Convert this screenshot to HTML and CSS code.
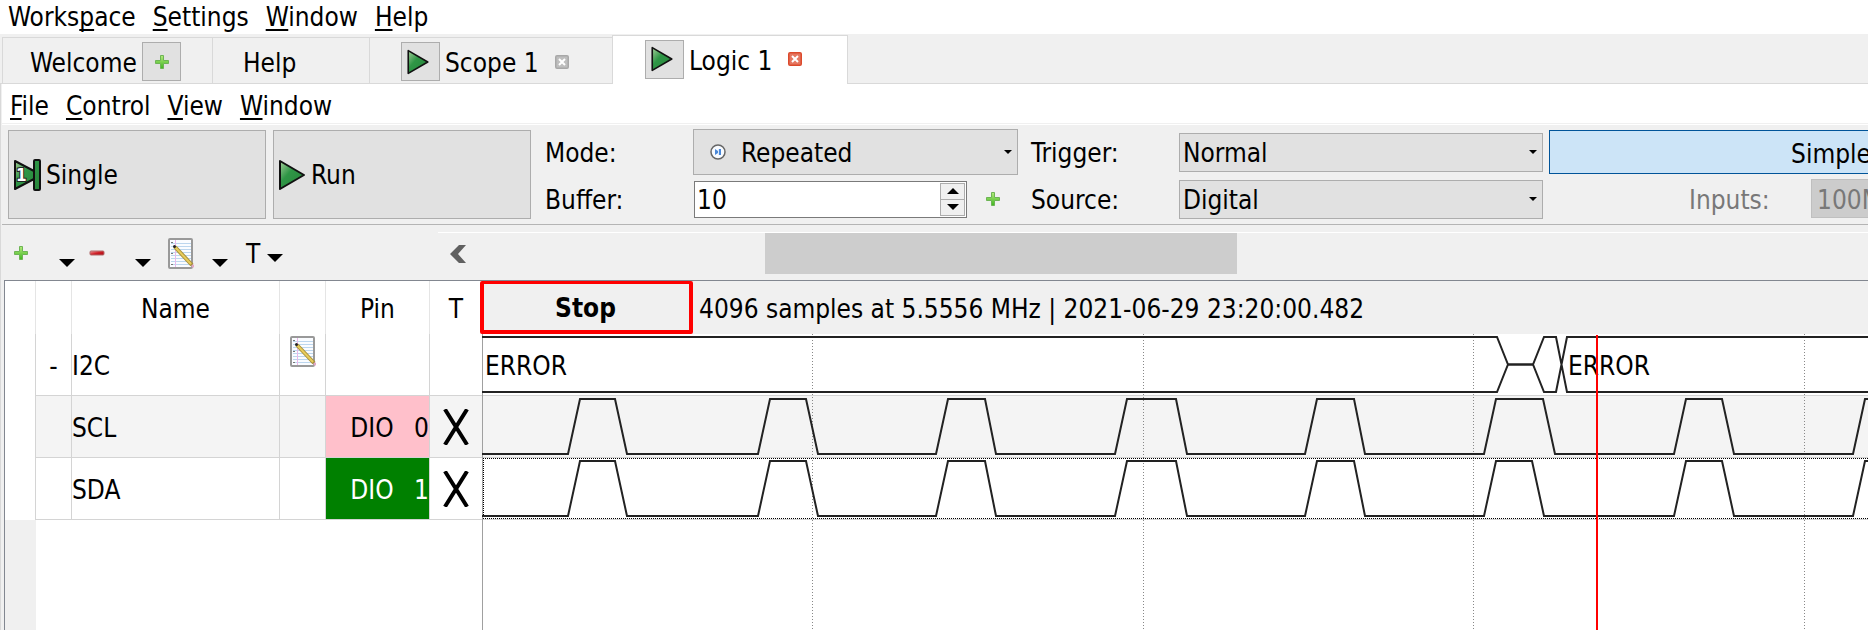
FILE: index.html
```html
<!DOCTYPE html>
<html lang="en">
<head>
<meta charset="utf-8">
<title>Logic 1</title>
<link rel="stylesheet" href="styles.css">
</head>
<body>
<svg class="defs" width="0" height="0" aria-hidden="true">
  <defs>
    <linearGradient id="green" x1="0" y1="0" x2="1" y2="1"><stop offset="0" stop-color="#a8cf9c"/><stop offset=".4" stop-color="#2f9646"/><stop offset="1" stop-color="#27843a"/></linearGradient>
    <linearGradient id="lime" x1="0" y1="0" x2="0" y2="1"><stop offset="0" stop-color="#b4ec7c"/><stop offset="1" stop-color="#3fb520"/></linearGradient>
    <linearGradient id="red" x1="0" y1="0" x2="1" y2="1"><stop offset="0" stop-color="#f0a0a0"/><stop offset=".5" stop-color="#d02028"/><stop offset="1" stop-color="#a80810"/></linearGradient>
    <symbol id="play" viewBox="0 0 28 32"><path d="M2 2 L26 16 L2 30 Z" fill="url(#green)" stroke="#111" stroke-width="2" stroke-linejoin="round"/></symbol>
    <symbol id="plus" viewBox="0 0 16 16"><path d="M6.500 1.500h3v5h5v3h-5v5h-3v-5h-5v-3h5z" fill="url(#lime)" stroke="#6db455" stroke-width="1"/></symbol>
    <symbol id="minus" viewBox="0 0 16 16"><rect x="1" y="6" width="14" height="4" rx="1" fill="url(#red)" stroke="#b06a6a" stroke-width="1"/></symbol>
    <symbol id="note" viewBox="0 0 26 32">
      <rect x="1" y="2" width="23" height="29" rx="1" fill="#fafcff" stroke="#999" stroke-width="2"/>
      <path d="M3 6.500h20M3 9.500h20M3 12.500h20M3 15.500h20M3 18.500h20M3 21.500h20M3 24.500h20M3 27.500h20" stroke="#bcd6ee"/>
      <path d="M7.500 3v27" stroke="#e9b8ea"/>
      <path d="M4 5v1M4 16v1M4 27v1" stroke="#777" stroke-width="2"/>
      <path d="M7 10 L24 28" stroke="#a8903a" stroke-width="4"/>
      <path d="M7 10 L23 27" stroke="#e8cc5c" stroke-width="2"/>
      <circle cx="6.500" cy="9.500" r="1.500" fill="#222"/><circle cx="25" cy="29" r="1.500" fill="#e3a6c4"/>
    </symbol>
    <symbol id="down" viewBox="0 0 16 8"><path d="M0 0h16l-8 8z"/></symbol>
    <symbol id="close" viewBox="0 0 14 14"><rect x="1" y="1" width="12" height="12" rx="1" fill="currentColor" stroke="currentColor" stroke-width="2"/><rect x="1.500" y="1.500" width="11" height="11" fill="#fff" opacity=".25"/><path d="M4 4l6 6M10 4l-6 6" stroke="#fff" stroke-width="2"/></symbol>
  </defs>
</svg>

<nav class="menubar">
  <a href="#">Works<u>p</u>ace</a><a href="#"><u>S</u>ettings</a><a href="#"><u>W</u>indow</a><a href="#"><u>H</u>elp</a>
</nav>

<div class="tabs">
  <div class="tab tab-welcome"><a href="#">Welcome</a><button class="tab-btn" aria-label="Add"><svg class="i16"><use href="#plus"/></svg></button></div>
  <div class="tab tab-help"><a href="#">Help</a></div>
  <div class="tab tab-scope"><button class="tab-btn tab-run" aria-label="Run scope"><svg class="i-tabplay"><use href="#play"/></svg></button><a href="#">Scope 1</a><button class="close" aria-label="Close scope"><svg class="i14"><use href="#close"/></svg></button></div>
  <div class="tab tab-logic"><button class="tab-btn tab-run" aria-label="Run logic"><svg class="i-tabplay"><use href="#play"/></svg></button><a href="#">Logic 1</a><button class="close close-on" aria-label="Close logic"><svg class="i14"><use href="#close"/></svg></button></div>
</div>

<main class="panel">
  <nav class="menubar submenu">
    <a href="#"><u>F</u>ile</a><a href="#"><u>C</u>ontrol</a><a href="#"><u>V</u>iew</a><a href="#"><u>W</u>indow</a>
  </nav>

  <div class="controls">
    <button class="big"><svg class="i-play" viewBox="0 0 28 32"><path d="M2 2 L21 12 V2 Q21 1 22 1 H26 Q27 1 27 2 V30 Q27 31 26 31 H22 Q21 31 21 30 V20 L2 30 Z" fill="url(#green)" stroke="#111" stroke-width="2" stroke-linejoin="round"/><path d="M21 10v12" stroke="#111" stroke-width="2"/><text class="one" x="3" y="22">1</text></svg>Single</button>
    <button class="big"><svg class="i-play"><use href="#play"/></svg>Run</button>

    <div class="fields fields-mode">
      <label for="mode">Mode:</label>
      <div class="pick pick-mode">
        <svg class="i16 mode-icon" viewBox="0 0 16 16"><circle cx="8" cy="8" r="7" fill="#f8fbff" stroke="#666" stroke-width="1.500"/><path d="M5 5l3 2v-2h3v6h-3v-2l-3 2z" fill="#4a88d8"/><path d="M8.500 5v6" stroke="#dce9fa"/></svg>
        <select id="mode"><option>Repeated</option></select><svg class="arrow"><use href="#down"/></svg>
      </div>
      <label for="buffer">Buffer:</label>
      <div class="buffer">
        <div class="spin"><input id="buffer" type="text" value="10"><div class="steps"><button aria-label="Increase"><svg class="step up"><use href="#down"/></svg></button><button aria-label="Decrease"><svg class="step"><use href="#down"/></svg></button></div></div>
        <button class="plain" aria-label="Add buffer"><svg class="i16"><use href="#plus"/></svg></button>
      </div>
    </div>

    <div class="fields fields-trigger">
      <label for="trigger">Trigger:</label>
      <div class="pick"><select id="trigger"><option>Normal</option></select><svg class="arrow"><use href="#down"/></svg></div>
      <label for="source">Source:</label>
      <div class="pick"><select id="source"><option>Digital</option></select><svg class="arrow"><use href="#down"/></svg></div>
    </div>

    <div class="simple-group">
      <button class="simple">Simple</button>
      <div class="inputs"><label for="inputs">Inputs:</label><select id="inputs" disabled><option>100MHz</option></select></div>
    </div>
  </div>

  <div class="strip">
    <div class="tools">
      <button class="tool" aria-label="Add channel"><svg class="i16"><use href="#plus"/></svg><svg class="drop"><use href="#down"/></svg></button>
      <button class="tool" aria-label="Remove channel"><svg class="i16"><use href="#minus"/></svg><svg class="drop"><use href="#down"/></svg></button>
      <button class="tool tool-note" aria-label="Edit channel"><svg class="i-note"><use href="#note"/></svg><svg class="drop"><use href="#down"/></svg></button>
      <button class="tool tool-t">T<svg class="drop"><use href="#down"/></svg></button>
    </div>
    <div class="scroll">
      <button class="plain scroll-left" aria-label="Scroll left"><svg class="chev" viewBox="0 0 16 18"><path d="M0 9L9 0h7L8 9l8 9h-7z" fill="#606060"/></svg></button>
      <div class="thumb"></div>
    </div>
  </div>

  <div class="view">
    <div class="side">
      <table class="signals">
        <colgroup><col class="c-gut"><col class="c-exp"><col class="c-name"><col class="c-edit"><col class="c-pin"><col class="c-trig"></colgroup>
        <thead><tr><th></th><th></th><th>Name</th><th></th><th>Pin</th><th class="trig">T</th></tr></thead>
        <tbody>
          <tr><td></td><td class="exp">-</td><td>I2C</td><td class="edit"><svg class="i-note"><use href="#note"/></svg></td><td></td><td></td></tr>
          <tr class="alt"><td></td><td></td><td>SCL</td><td></td><td class="pin pink">DIO <span>0</span></td><td class="trig"><svg class="x" viewBox="0 0 26 36"><path d="M3 2L23 34M23 2L3 34"/></svg></td></tr>
          <tr><td></td><td></td><td>SDA</td><td></td><td class="pin green">DIO <span>1</span></td><td class="trig"><svg class="x" viewBox="0 0 26 36"><path d="M3 2L23 34M23 2L3 34"/></svg></td></tr>
        </tbody>
      </table>
      <div class="below"></div>
    </div>
    <div class="plot">
      <div class="status"><strong class="stop">Stop</strong><span>4096 samples at 5.5556 MHz | 2021-06-29 23:20:00.482</span></div>
      <svg class="waves">
        <rect y="62" width="100%" height="61" fill="#f4f4f4"/>
        <path class="row" d="M0 61.500H4000M0 123.500H4000M0 185.500H4000"/>
        <path class="axis" d="M.5 0V4000"/>
        <path class="grid" d="M330.500 0V4000M661.500 0V4000M991.500 0V4000M1322.500 0V4000"/>
        <path class="focus" d="M1 124.500H4000M1 184.500H4000M1.500 124V184"/>
        <path class="wave" d="M0 3H1015L1026 30.500H1051L1062 3H1074L1085 58H4000M0 58H1015L1026 30.500H1051L1062 58H1074L1085 3H4000"/>
        <path class="wave" d="M1026 30.500H1051"/>
        <path class="wave" d="M0 120H86L98 65H133L145 120H276L288 65H324L336 120H454L466 65H503L514 120H633L645 65H694L705 120H823L835 65H872L883 120H1002L1014 65H1061L1073 120H1192L1204 65H1240L1252 120H1371L1383 65H1420L1432 120"/>
        <path class="wave" d="M0 182H86L98 127H133L145 182H276L288 127H324L336 182H454L466 127H503L514 182H633L645 127H694L705 182H823L835 127H872L883 182H1002L1014 127H1050L1062 182H1192L1204 127H1240L1252 182H1371L1383 127H1420L1432 182"/>
        <text x="3" y="41">ERROR</text><text x="1086" y="41">ERROR</text>
        <path class="cursor" d="M1115 1V4000"/>
      </svg>
    </div>
  </div>
</main>
</body>
</html>
```

FILE: styles.css
```css
* { box-sizing: border-box; }
html, body { height: 100%; }
body {
  margin: 0;
  display: flex;
  flex-direction: column;
  overflow: hidden;
  background: #f0f0f0;
  color: #000;
  font: 26px/32px "DejaVu Sans Condensed", "Noto Sans", sans-serif;
}
button, input, select { font: inherit; color: inherit; margin: 0; border-radius: 0; }
a { color: inherit; text-decoration: none; }
svg { display: block; flex: none; }
.defs { position: absolute; }
.i14 { width: 14px; height: 14px; }
.i16 { width: 16px; height: 16px; }
.i-tabplay { width: 24px; height: 26px; }
.i-play { width: 28px; height: 32px; }
.i-note { width: 26px; height: 32px; }
.plain, .close { border: 0; padding: 0; background: none; }

.menubar { display: flex; flex: none; gap: 17px; height: 34px; padding: 1px 8px 0; background: #fff; white-space: nowrap; }
.menubar u { text-underline-offset: 3px; text-decoration-thickness: 2px; text-decoration-skip-ink: none; }

.tabs { display: flex; flex: none; align-items: flex-end; height: 50px; padding-left: 2px; box-shadow: inset 0 -1px #d9d9d9; white-space: nowrap; }
.tab { display: flex; align-items: center; height: 47px; padding-top: 2px; border: 1px solid #d9d9d9; border-right: 0; }
.tab a { padding-top: 3px; }
.tab-btn { display: flex; align-items: center; justify-content: center; width: 39px; height: 39px; padding: 0; border: 1px solid #adadad; background: #e1e1e1; }
.tab-run { padding-right: 5px; }
.tab-welcome { width: 210px; padding-left: 27px; justify-content: space-between; padding-right: 31px; }
.tab-help { width: 157px; padding-left: 30px; }
.tab-scope { width: 243px; padding-left: 31px; gap: 5px; }
.tab-logic { width: 236px; height: 49px; padding: 0 0 2px 32px; gap: 5px; background: #fff; border-right: 1px solid #d9d9d9; border-bottom: 0; }
.close { margin-left: 11px; color: #a8a8a8; }
.close-on { color: #dc4a2c; }

.panel { flex: 1; display: flex; flex-direction: column; min-height: 0; border-left: 1px solid #d9d9d9; padding-left: 1px; }
.submenu { height: 40px; padding-top: 6px; border-bottom: 1px solid #f0f0f0; }

.controls { display: flex; flex: none; height: 101px; padding: 5px 0 6px 6px; border-top: 1px solid #fff; border-bottom: 1px solid #b4b4b4; overflow: hidden; white-space: nowrap; }
.big { display: flex; flex: none; align-items: center; gap: 5px; width: 258px; height: 89px; margin-right: 7px; padding: 0 4px; border: 1px solid #adadad; background: #e1e1e1; }
.one { font: bold 17px "DejaVu Sans Condensed", sans-serif; fill: #fff; stroke: #222; stroke-width: 2px; paint-order: stroke; }
.fields { display: grid; flex: none; align-items: center; align-content: start; }
.fields label { padding-top: 1px; }
.fields-mode { grid-template-columns: 148px 325px; grid-template-rows: 46px 48px; margin: -1px 13px 0 7px; }
.fields-trigger { grid-template-columns: 148px 364px; grid-template-rows: 44px 50px; margin-right: 6px; }
.pick { display: flex; position: relative; }
.pick select { appearance: none; width: 100%; height: 39px; padding: 2px 24px 0 3px; border: 1px solid #adadad; background: #e1e1e1; }
.pick-mode select { height: 46px; padding-left: 47px; }
.mode-icon { position: absolute; left: 17px; top: 15px; }
.arrow { position: absolute; right: 6px; top: 50%; width: 8px; height: 4px; margin-top: -2px; }
.buffer { display: flex; align-items: center; gap: 18px; padding-left: 1px; }
.spin { display: flex; width: 273px; height: 37px; padding: 1px; border: 1px solid #7a7a7a; background: #fff; }
.spin input { flex: 1; min-width: 0; padding: 1px 1px 0; border: 0; background: none; }
.steps { display: flex; flex-direction: column; width: 25px; border: 1px solid #adadad; }
.steps button { display: flex; flex: 1; align-items: center; justify-content: center; padding: 0; border: 0; background: #f0f0f0; }
.steps button + button { border-top: 1px solid #adadad; }
.step { width: 12px; height: 6px; }
.up { transform: rotate(180deg); }
.simple-group { flex: 1; min-width: 0; }
.simple { display: block; width: 564px; height: 44px; padding: 4px 0 0; border: 1px solid #005499; background: #cce4f7; }
.inputs { display: flex; align-items: center; margin-top: 5px; padding-left: 140px; color: #787878; }
.inputs label { flex: none; width: 122px; padding-top: 2px; }
.inputs select { appearance: none; flex: none; width: 200px; height: 39px; padding: 2px 5px 0; border: 1px solid #bfbfbf; background: #ccc; opacity: 1; }

.strip { display: flex; flex: none; height: 55px; }
.tools { display: flex; flex: none; width: 436px; padding-left: 11px; }
.tool { display: flex; align-items: center; justify-content: space-between; width: 62px; height: 55px; margin-right: 14px; padding: 0; border: 0; background: none; }
.tool .drop { width: 16px; height: 8px; margin-top: 20px; }
.tool-note { width: 60px; margin: 0 18px 0 3px; }
.tool-t { width: 37px; padding-top: 2px; }
.tool-t .drop { margin-top: 8px; }
.scroll { display: flex; flex: 1; align-items: stretch; height: 42px; margin-top: 7px; border-top: 1px solid #fff; }
.scroll-left { display: flex; align-items: center; width: 41px; padding-left: 12px; }
.chev { width: 16px; height: 18px; }
.thumb { width: 33%; margin-left: 20%; background: #cdcdcd; }

.view { flex: 1; display: flex; min-height: 0; margin-left: 2px; border-top: 1px solid #828790; border-left: 1px solid #828790; }
.side { display: flex; flex: none; flex-direction: column; width: 477px; }
.signals { width: 477px; table-layout: fixed; border-collapse: separate; border-spacing: 0; background: #fff; white-space: nowrap; }
.c-gut { width: 31px; } .c-exp { width: 36px; } .c-name { width: 208px; } .c-edit { width: 46px; } .c-pin { width: 104px; } .c-trig { width: 52px; }
.signals th { height: 53px; padding: 2px 0 0; font-weight: normal; border-right: 1px solid #e5e5e5; }
.signals td { height: 62px; padding: 2px 0 0; border-right: 1px solid #d4d4d4; border-bottom: 1px solid #d4d4d4; }
.signals td:first-child { border-bottom: 0; background: #fff; }
.signals th:last-child, .signals td:last-child { border-right: 0; }
.alt { background: #f4f4f4; }
.signals .exp { text-align: center; }
.signals .edit { padding: 0 0 28px 10px; }
.signals .pin { text-align: right; }
.pin span { padding-left: 13px; }
.pink { background: #ffc0cb; }
.green { background: #008000; color: #fff; }
.signals .trig { padding-bottom: 0; }
.signals td.trig { padding: 0; }
.x { width: 26px; height: 36px; margin: 0 auto; fill: none; stroke: #000; stroke-width: 4px; stroke-linecap: square; }
.below { flex: 1; border-left: 31px solid #f0f0f0; background: #fff; }

.plot { flex: 1; display: flex; flex-direction: column; min-width: 0; background: #fff; }
.status { display: flex; flex: none; align-items: center; gap: 6px; height: 53px; background: #f0f0f0; white-space: nowrap; }
.status span { padding-top: 2px; }
.stop { width: 213px; height: 53px; margin-left: -2px; padding-right: 2px; border: 4px solid #f00; border-top-width: 3px; border-radius: 2px; line-height: 48px; text-align: center; }
.waves { flex: 1; width: 100%; min-height: 0; overflow: hidden; }
.waves path { fill: none; }
.waves .row { stroke: #d4d4d4; }
.waves .axis { stroke: #a0a0a0; }
.waves .grid { stroke: #888; stroke-dasharray: 1 2; shape-rendering: crispEdges; }
.waves .focus { stroke: #000; stroke-dasharray: 1 1; shape-rendering: crispEdges; }
.waves .wave { stroke: #222; stroke-width: 2px; }
.waves .cursor { stroke: #f00; stroke-width: 2px; }
```
